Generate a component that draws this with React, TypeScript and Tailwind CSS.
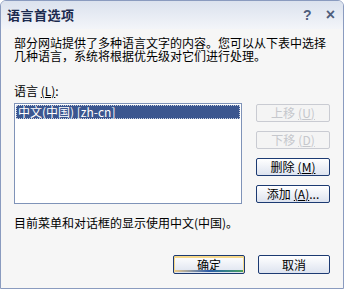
import React from 'react';

const cjk = { fontFamily: '"Noto Sans CJK SC", "Liberation Sans", sans-serif' };

function SideButton({ label, hot, suffix, disabled }: { label: string; hot: string; suffix?: string; disabled?: boolean }) {
    return (
        <button
            className={`w-[74px] h-[18px] rounded-[2px] border text-[12px] leading-none flex items-center justify-center ${
                disabled
                    ? 'border-[#c9cbd2] bg-[#f4f4f4] text-[#c5c7cc]'
                    : 'border-[#1c3a72] bg-gradient-to-b from-white to-[#dde3ef] text-black'
            }`}
        >
            {label}
            <span className="ml-[3px] underline">({hot})</span>
            {suffix}
        </button>
    );
}

export default function App() {
    return (
        <div
            className="w-[344px] h-[289px] bg-[#f6f6f6] border border-[#8a9bbf] rounded-t-[6px] flex flex-col text-black overflow-hidden"
            style={cjk}
        >
            {/* title bar */}
            <div className="h-[28px] pl-[6px] pr-[8px] flex items-center justify-between bg-gradient-to-b from-[#dbe2ee] to-[#f3f5f9]">
                <span className="text-[13px] font-bold text-[#1b2a4e] tracking-[0.5px]">语言首选项</span>
                <div className="flex items-center gap-[14px] text-[#4e5d7c] font-bold text-[14px]" style={{ fontFamily: '"Liberation Sans", sans-serif' }}>
                    <span>?</span>
                    <span className="text-[16px]">×</span>
                </div>
            </div>

            <div className="px-[13px] flex flex-col flex-1">
                <p className="mt-[7px] text-[12px] leading-[13px]">
                    部分网站提供了多种语言文字的内容。您可以从下表中选择几种语言，系统将根据优先级对它们进行处理。
                </p>

                <div className="mt-[22px] text-[12px] leading-[13px]">
                    语言 <span className="underline">(L)</span>:
                </div>

                <div className="mt-[6px] flex gap-[14px]">
                    <div className="w-[230px] h-[101px] bg-white border border-[#7f93b8] p-[1px]">
                        <div className="h-[14px] bg-[#3b568f] text-white text-[12px] leading-[14px] px-[2px] outline outline-1 outline-dotted outline-[#c8d0e0] -outline-offset-1">
                            中文(中国) [zh-cn]
                        </div>
                    </div>
                    <div className="flex flex-col gap-[9px] pt-[1px]">
                        <SideButton label="上移" hot="U" disabled />
                        <SideButton label="下移" hot="D" disabled />
                        <SideButton label="删除" hot="M" />
                        <SideButton label="添加" hot="A" suffix="..." />
                    </div>
                </div>

                <div className="mt-[12px] text-[12px] leading-[13px]">目前菜单和对话框的显示使用中文(中国)。</div>

                <div className="mt-[26px] flex justify-end gap-[13px]">
                    <button className="relative w-[72px] h-[19px] rounded-[2px] border border-[#1c3a72] bg-gradient-to-b from-white to-[#dde3ef] text-[12px] leading-none shadow-[inset_0_1px_0_1px_#f6d88a] overflow-hidden">
                        确定
                        <span className="absolute left-[1px] right-[1px] bottom-[1px] h-[2px] bg-gradient-to-r from-[#e9c889] via-[#2c5ba8] to-[#4aa05a]" />
                    </button>
                    <button className="w-[72px] h-[19px] rounded-[2px] border border-[#1c3a72] bg-gradient-to-b from-white to-[#dde3ef] text-[12px] leading-none">
                        取消
                    </button>
                </div>
            </div>
        </div>
    );
}
